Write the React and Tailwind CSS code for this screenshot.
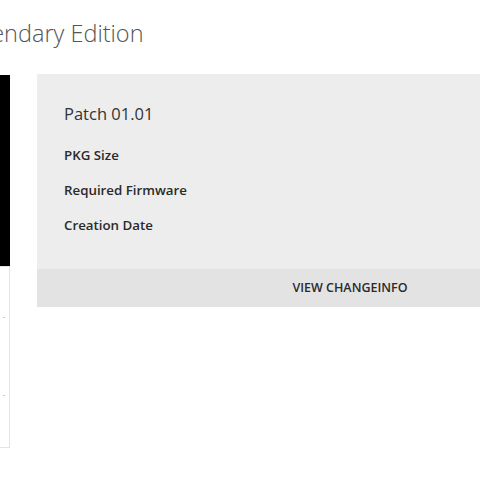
export default function App() {
  return (
    <div className="w-[480px] h-[480px] overflow-hidden bg-white" style={{ fontFamily: '"Open Sans", "Noto Sans", sans-serif' }}>
      <h1 className="ml-[-46px] pt-[16px] h-[74px] text-[23.5px] font-light text-[#555] whitespace-nowrap">Legendary Edition</h1>
      <div className="flex items-start ml-[-190px] gap-[27px]">
        <div className="w-[200px] shrink-0 flex flex-col">
          <div className="h-[191px] bg-black mt-px" />
          <div className="h-[182px] border border-[#e3e3e3] bg-white relative">
            <span className="absolute right-[4px] top-[50px] w-[2px] h-px bg-[#ccc]" />
            <span className="absolute right-[4px] top-[128px] w-[2px] h-px bg-[#ccc]" />
          </div>
        </div>
        <div className="w-[626px] shrink-0 bg-[#ededed]">
          <div className="px-[27px] pt-[27px] pb-[33px]">
            <div className="text-[16.5px] text-[#333] leading-[26px]">Patch 01.01</div>
            <div className="mt-[18px] flex flex-col gap-[14px] text-[13.3px] font-semibold text-[#2a2a2a] leading-[21px]">
              <div>PKG Size</div>
              <div>Required Firmware</div>
              <div>Creation Date</div>
            </div>
          </div>
          <div className="h-[38px] bg-[#e3e3e3] flex items-center justify-center text-[12.5px] font-semibold text-[#2a2a2a]">
            VIEW CHANGEINFO
          </div>
        </div>
      </div>
    </div>
  )
}
